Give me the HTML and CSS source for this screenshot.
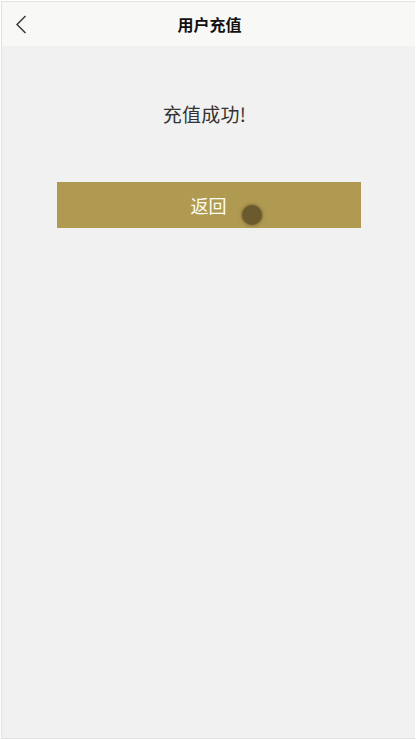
FILE: index.html
```html
<!DOCTYPE html>
<html lang="zh">
<head>
<meta charset="utf-8">
<link rel="stylesheet" href="styles.css">
</head>
<body>
<div class="frame">
  <header class="bar">
    <span class="back">
      <svg width="12" height="19" viewBox="0 0 12 19"><path d="M10.5 1 L2 9.5 L10.5 18" fill="none" stroke="#333" stroke-width="1.4"/></svg>
    </span>
    <h1 class="title">用户充值</h1>
  </header>
  <main class="content">
    <p class="msg">充值成功!</p>
    <div class="btn">返回<span class="touch"></span></div>
  </main>
</div>
</body>
</html>
```
FILE: styles.css
```css
html, body { margin: 0; padding: 0; background: #ffffff; }
body {
  font-family: "Noto Sans CJK SC", "Noto Sans", sans-serif;
  width: 416px; height: 740px; overflow: hidden;
}
.frame {
  margin: 1px 1px 0 1px;
  height: 736px;
  border: 1px solid #e2e2e2;
  border-right: none;
  background: #f1f1f1;
  display: flex; flex-direction: column;
}
.bar {
  height: 44px;
  background: #f8f8f6;
  display: flex; align-items: center; justify-content: center;
  position: relative;
}
.back {
  position: absolute; left: 13px; top: 13px;
  display: flex;
}
.title {
  margin: 0; font-size: 16px; font-weight: bold; color: #111;
  padding-left: 2px;
}
.content {
  display: flex; flex-direction: column; align-items: center;
}
.msg {
  margin: 55px 0 0 0; font-size: 19px; color: #333; line-height: 26px;
  padding-right: 8px;
  letter-spacing: 0.3px;
}
.btn {
  margin-top: 55px;
  width: 304px; height: 46px;
  background: #b09a52;
  color: #fffdf2; font-size: 18px;
  display: flex; align-items: center; justify-content: center;
  position: relative;
}
.touch {
  position: absolute; left: 185px; top: 23px;
  width: 20px; height: 20px; border-radius: 50%;
  background: #6b5a2e;
  box-shadow: 0 0 3px 1px rgba(107,90,46,0.6);
}
```
